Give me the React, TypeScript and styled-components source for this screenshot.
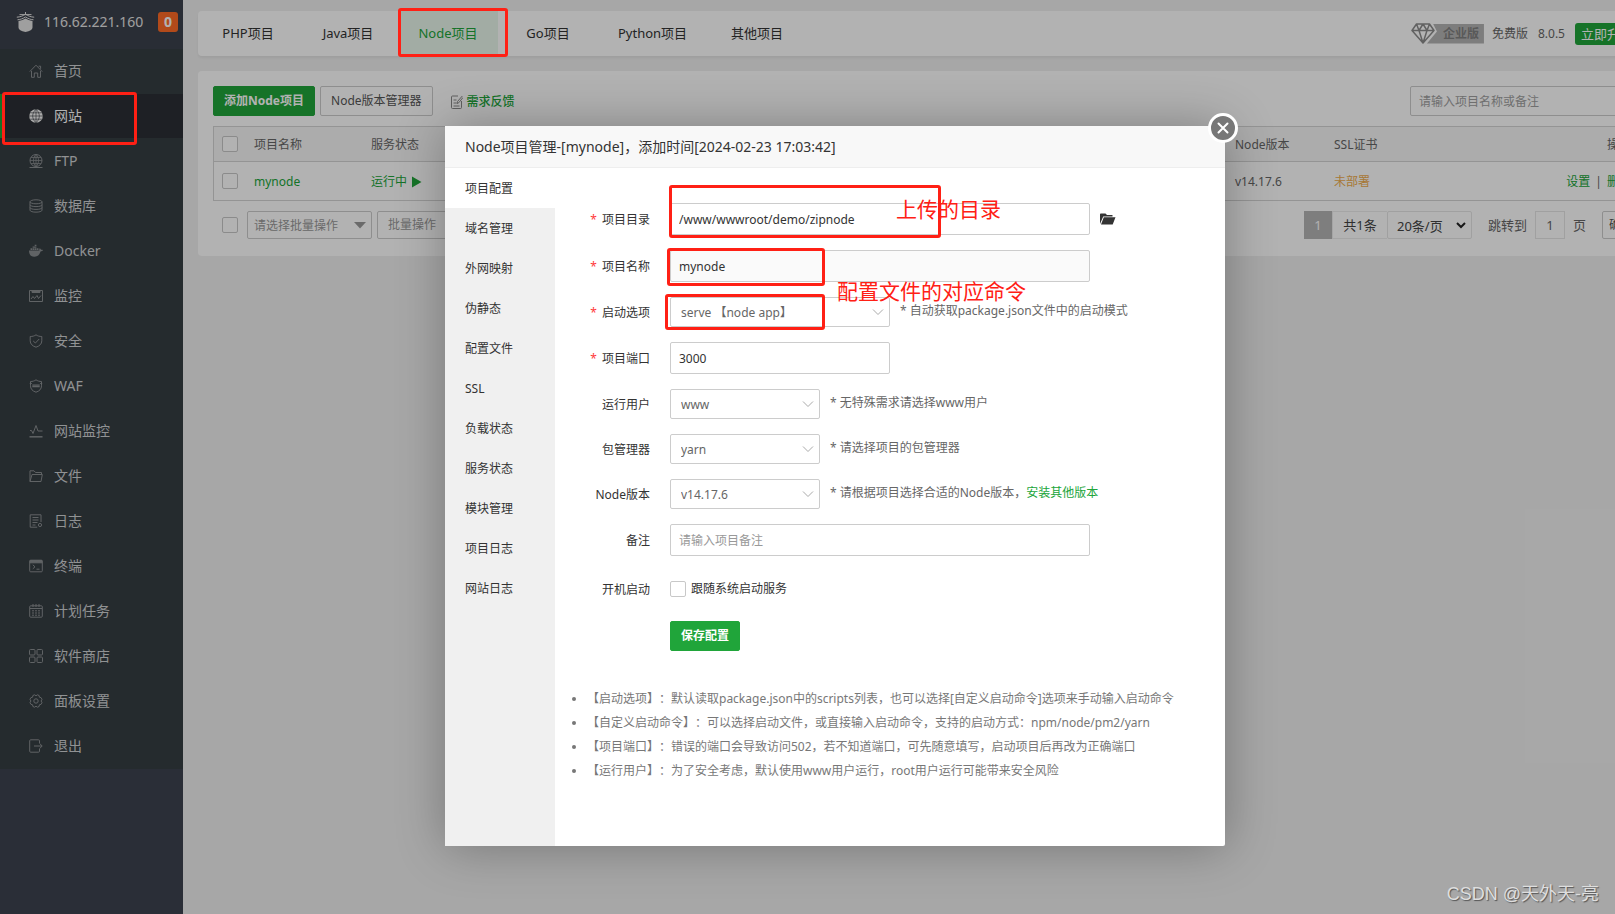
import React, { ReactNode } from "react";
import styled, { createGlobalStyle, css } from "styled-components";

const GREEN = "#20a53a";
const MARK = "#ff2015";

const GlobalStyle = createGlobalStyle`
  *, *::before, *::after { box-sizing: border-box; }
  body {
    margin: 0;
    background: #f0f0f0;
    color: #666;
    font-family: "Noto Sans", "Noto Sans CJK SC", sans-serif;
    font-size: 12px;
    line-height: 18px;
    text-spacing-trim: space-all;
  }
  button, input, select { font: inherit; color: inherit; margin: 0; }
  button { cursor: pointer; }
  ul { list-style: none; margin: 0; padding: 0; }
  a { text-decoration: none; }
`;

/* ---------- page frame ---------- */

const Viewport = styled.div`
  position: relative;
  overflow: hidden;
`;

const Page = styled.div`
  position: relative;
  display: flex;
  min-height: 100vh;
  margin-right: -55px;
`;

const Highlight = styled.span<{ $box: string }>`
  position: absolute;
  inset: ${(p) => p.$box};
  z-index: 20;
  border: 3px solid ${MARK};
  border-radius: 3px;
  pointer-events: none;
`;

/* ---------- sidebar ---------- */

const Sidebar = styled.aside`
  flex: none;
  width: 183px;
  background: #3d4250;
`;

const Brand = styled.div`
  display: flex;
  align-items: center;
  height: 49px;
  padding: 0 5px 5px 16px;
  color: #e4e4e4;
  font-size: 14px;
  background: #3c414c;
`;

const BrandIp = styled.span`
  flex: 1;
  margin-left: 9px;
`;

const Badge = styled.span`
  width: 20px;
  height: 20px;
  border-radius: 3px;
  background: #ff6b26;
  color: #fff;
  font-weight: 700;
  line-height: 20px;
  text-align: center;
`;

const Menu = styled.ul`
  background: #363e43;
`;

const MenuItem = styled.li`
  position: relative;
  padding-bottom: 1px;
`;

const MenuLink = styled.a<{ $active?: boolean }>`
  display: flex;
  align-items: center;
  gap: 11px;
  height: 44px;
  padding-left: 29px;
  color: #cfd1d3;
  font-size: 14px;
  & > svg { color: #8a8e91; }
  ${(p) =>
    p.$active &&
    css`
      padding-left: 27px;
      border-left: 2px solid ${GREEN};
      background: #2b2f35;
      color: #fff;
      & > svg { color: #f4f4f4; }
    `}
`;

/* ---------- main area ---------- */

const Main = styled.main`
  flex: 1;
  min-width: 0;
  padding: 11px 15px;
`;

const TopBar = styled.header`
  display: flex;
  align-items: center;
  justify-content: space-between;
  height: 45px;
  margin-bottom: 15px;
  padding-right: 16px;
  border-radius: 4px;
  background: #fff;
  box-shadow: 0 2px 3px rgba(0, 0, 0, 0.06);
`;

const Tabs = styled.nav`
  display: flex;
`;

const Tab = styled.a<{ $active?: boolean }>`
  position: relative;
  min-width: 100px;
  padding: 0 20px;
  color: ${(p) => (p.$active ? GREEN : "#333")};
  background: ${(p) => (p.$active ? "#e9f6eb" : "transparent")};
  font-size: 13px;
  line-height: 45px;
  text-align: center;
`;

const Version = styled.div`
  display: flex;
  align-items: center;
  gap: 10px;
`;

const Edition = styled.span`
  display: flex;
  align-items: center;
  margin-right: -2px;
`;

const Ribbon = styled.span`
  height: 20px;
  margin-left: -8px;
  padding: 0 5px 0 16px;
  background: #b4b4b4;
  clip-path: polygon(6px 0, 100% 0, 100% 100%, 0 100%, 10px 8px);
  color: #808080;
  font-weight: 700;
  line-height: 20px;
`;

const UpgradeButton = styled.button`
  height: 22px;
  padding: 0 6px;
  border: 0;
  border-radius: 3px;
  background: ${GREEN};
  color: #fff;
  font-size: 13px;
  line-height: 22px;
  white-space: nowrap;
`;

const Panel = styled.section`
  padding: 15px 15px 17px;
  border-radius: 4px;
  background: #fff;
`;

const Toolbar = styled.div`
  display: flex;
  align-items: center;
  gap: 5px;
  margin-bottom: 10px;
`;

const Button = styled.button<{ $primary?: boolean; $muted?: boolean; $compact?: boolean }>`
  height: ${(p) => (p.$muted ? 28 : 30)}px;
  padding: 0 ${(p) => (p.$compact ? 6 : 10)}px;
  border: 1px solid ${(p) => (p.$primary ? GREEN : "#ccc")};
  border-radius: 2px;
  background: ${(p) => (p.$primary ? GREEN : "#fff")};
  color: ${(p) => (p.$primary ? "#fff" : p.$compact ? "#555" : p.$muted ? "#999" : "#555")};
  font-size: 12px;
  font-weight: ${(p) => (p.$primary ? 700 : 400)};
  white-space: nowrap;
`;

const FeedbackLink = styled.a`
  display: flex;
  align-items: center;
  gap: 4px;
  margin-left: 13px;
  padding-top: 2px;
  color: ${GREEN};
  font-weight: 500;
  & > svg { color: #888; }
`;

const SearchInput = styled.input`
  width: 230px;
  height: 30px;
  margin-left: auto;
  padding: 0 8px;
  border: 1px solid #ccc;
  border-radius: 2px;
  background: #fff;
  &::placeholder { color: #a0a0a0; }
`;

const Checkbox = styled.input.attrs({ type: "checkbox" })`
  appearance: none;
  display: block;
  flex: none;
  width: 16px;
  height: 16px;
  border: 1px solid #c8c8c8;
  border-radius: 2px;
  background: #fff;
`;

const Table = styled.table`
  width: 100%;
  table-layout: fixed;
  border: 1px solid #d5d5d5;
  border-spacing: 0;
  th, td {
    padding: 2px 8px 0;
    font-weight: 400;
    text-align: left;
  }
  th {
    height: 35px;
    border-bottom: 1px solid #d5d5d5;
    background: #f6f6f6;
  }
  td { height: 38px; }
  th:first-child, td:first-child { padding-top: 0; }
  th:last-child, td:last-child { text-align: right; }
`;

const Col = styled.col<{ $w?: number }>`
  width: ${(p) => (p.$w ? `${p.$w}px` : "auto")};
`;

const GreenLink = styled.a`
  color: ${GREEN};
`;

const Running = styled.a`
  display: flex;
  align-items: center;
  gap: 5px;
  color: ${GREEN};
`;

const Warning = styled.span`
  color: #f0ad4e;
`;

const Divider = styled.span`
  margin: 0 5px;
`;

const TableFooter = styled.div`
  display: flex;
  align-items: center;
  gap: 5px;
  margin-top: 10px;
  padding-left: 9px;
`;

const SelectWrap = styled.span<{ $w: number }>`
  position: relative;
  display: block;
  flex: none;
  width: ${(p) => p.$w}px;
  & > svg {
    position: absolute;
    top: 50%;
    right: 6px;
    margin-top: -6px;
    color: #aaa;
    pointer-events: none;
  }
`;

const SelectBox = styled.select<{ $h: number; $pad: number; $ink: string; $line: string; $size: number }>`
  appearance: none;
  display: block;
  width: 100%;
  height: ${(p) => p.$h}px;
  padding: 1px 20px 0 ${(p) => p.$pad}px;
  border: 1px solid ${(p) => p.$line};
  border-radius: 2px;
  background: #fff;
  color: ${(p) => p.$ink};
  font-size: ${(p) => p.$size}px;
`;

const BulkSelect = styled.span`
  margin-left: 4px;
`;

const Pager = styled.div`
  display: flex;
  align-items: center;
  margin-left: auto;
  font-size: 13px;
`;

const PageCurrent = styled.span`
  width: 28px;
  height: 28px;
  background: #b5b5b5;
  color: #fff;
  line-height: 28px;
  text-align: center;
`;

const PageTotal = styled.span`
  height: 28px;
  width: 55px;
  border: 1px solid #ececec;
  border-right: 0;
  color: #444;
  line-height: 26px;
  text-align: center;
`;

const JumpLabel = styled.label`
  display: flex;
  align-items: center;
  gap: 8px;
  margin: 0 16px;
`;

const PageInput = styled.input`
  width: 30px;
  height: 28px;
  padding: 0;
  border: 1px solid #e6e6e6;
  background: #fff;
  text-align: center;
`;

/* ---------- dialog ---------- */

const Overlay = styled.div`
  position: absolute;
  inset: 0;
  z-index: 10;
  display: flex;
  align-items: flex-start;
  justify-content: center;
  padding-top: 126px;
  background: rgba(0, 0, 0, 0.3);
`;

const Dialog = styled.div`
  position: relative;
  display: flex;
  flex-direction: column;
  width: 780px;
  min-height: 720px;
  border-radius: 2px;
  background: #fff;
  box-shadow: 1px 1px 50px rgba(0, 0, 0, 0.3);
  color: #333;
`;

const DialogTitle = styled.h2`
  margin: 0;
  padding: 0 20px;
  border-bottom: 1px solid #eee;
  background: #f8f8f8;
  font-size: 14px;
  font-weight: 400;
  line-height: 41px;
`;

const CloseButton = styled.button`
  position: absolute;
  top: -13px;
  right: -13px;
  display: grid;
  place-items: center;
  width: 30px;
  height: 30px;
  padding: 0;
  border: 3px solid #fff;
  border-radius: 50%;
  background: #777;
  color: #fff;
`;

const DialogBody = styled.div`
  display: flex;
  flex: 1;
`;

const SideTabs = styled.nav`
  flex: none;
  width: 110px;
  background: #f0f0f0;
`;

const SideTab = styled.a<{ $active?: boolean }>`
  display: block;
  padding: 2px 0 0 20px;
  background: ${(p) => (p.$active ? "#fff" : "transparent")};
  color: #333;
  line-height: 38px;
`;

const Form = styled.form`
  display: flex;
  flex: 1;
  flex-direction: column;
  gap: 15px;
  padding: 35px 15px 0;
`;

const Row = styled.div<{ $tall?: boolean }>`
  display: flex;
  align-items: center;
  gap: 10px;
  min-height: ${(p) => (p.$tall ? 35 : 30)}px;
`;

const Label = styled.label`
  width: 80px;
  margin-right: 10px;
  padding-top: 2px;
  text-align: right;
`;

const Star = styled.span`
  margin-right: 5px;
  color: #ff3b3b;
`;

const Field = styled.input<{ $w: number }>`
  width: ${(p) => p.$w}px;
  height: 32px;
  padding: 0 8px;
  border: 1px solid #ccc;
  border-radius: 2px;
  background: #fff;
  &:disabled { background: #fafafa; }
  &::placeholder { color: #999; }
`;

const Hint = styled.span`
  padding-bottom: 3px;
  color: #666;
`;

const IconButton = styled.button`
  display: flex;
  padding: 0;
  border: 0;
  background: none;
`;

const CheckLabel = styled.label`
  display: flex;
  align-items: center;
  gap: 5px;
`;

const Actions = styled.div`
  padding-left: 100px;
`;

const Tips = styled.ul`
  margin-top: 21px;
  padding-left: 17px;
  list-style: disc;
  color: #777;
  line-height: 24px;
  white-space: nowrap;
`;

const Note = styled.span<{ $x: number; $y: number }>`
  position: absolute;
  left: ${(p) => p.$x}px;
  top: ${(p) => p.$y}px;
  z-index: 21;
  color: ${MARK};
  font-size: 21px;
  line-height: 30px;
  white-space: nowrap;
  pointer-events: none;
`;

const Watermark = styled.div`
  position: absolute;
  right: 16px;
  bottom: 6px;
  z-index: 30;
  color: #dedede;
  font-family: "Liberation Sans", "Noto Sans CJK SC", sans-serif;
  font-size: 18px;
  line-height: 28px;
  text-shadow: 1px 1px 1px #555;
`;

/* ---------- icons ---------- */

const Glyph = ({ children }: { children: ReactNode }) => (
  <svg width="14" height="14" viewBox="0 0 14 14" fill="none" stroke="currentColor" strokeWidth="1" aria-hidden="true">
    {children}
  </svg>
);

const icons: Record<string, ReactNode> = {
  home: <path d="M.8 7.6 7 1.2l6.2 6.4M2.5 7v6.3h2.8V9h3.4v4.3h2.8V7M9.6 2.2h2v2.6" />,
  site: (
    <>
      <circle cx="7" cy="7" r="6.8" fill="currentColor" stroke="none" />
      <path d="M7 0v14M0 7h14M1.2 3.8h11.6M1.2 10.2h11.6M7 .3C2.6 4 2.6 10 7 13.7M7 .3c4.4 3.7 4.4 9.7 0 13.4" stroke="#2b2f35" strokeWidth=".6" />
    </>
  ),
  ftp: (
    <>
      <circle cx="7" cy="6.5" r="6" />
      <path d="M7 .5v12M1 6.500h12M2 3.500h10M2 9.500h10M7 .5c-3.400 3-3.400 9 0 12M7 .5c3.400 3 3.400 9 0 12" strokeWidth=".8" />
      <path d="M.5 13.500h13" />
    </>
  ),
  database: (
    <>
      <ellipse cx="7" cy="2.8" rx="6" ry="2" />
      <path d="M1 2.8v8.4c0 2.6 12 2.6 12 0V2.8M1 5.8c0 2.4 12 2.4 12 0M1 8.6c0 2.4 12 2.4 12 0" />
    </>
  ),
  docker: (
    <path
      d="M0 6.500h10.400c-.3-1-.2-1.700.4-2.300.9.5 1.100 1 1.200 1.600.7-.1 1.300 0 2 .3-.4 1-1.300 1.400-2.500 1.400C10.500 11 8.400 12.800 5.200 12.800 1.700 12.800 0 10.500 0 6.500ZM1.500 4.200h1.700v1.700H1.500zM3.600 4.200h1.700v1.700H3.600zM5.700 4.200h1.700v1.700H5.700zM7.800 4.200h1.700v1.700H7.800zM3.600 2.500h3.800v1.300H3.600zM5.700.800h1.700v1.300H5.700z"
      fill="currentColor"
      stroke="none"
    />
  ),
  monitor: (
    <>
      <path d="M.5 1.500h13v11H.5z" />
      <path d="M3 1.500h8v2H3z" fill="currentColor" />
      <path d="m2 10 2-2.500 1.500 2L8 6.500l1.500 3 2.500-3" />
    </>
  ),
  shield: <path d="M7 .8c1.500 1.200 3.500 1.700 5.800 1.700v4.300c0 3.200-2.300 5.300-5.800 6.400-3.500-1.100-5.800-3.200-5.800-6.400V2.500C3.500 2.500 5.500 2 7 .8ZM4.200 7l2.200 2 3.800-4" />,
  waf: (
    <>
      <path d="M7 .8c1.500 1.200 3.500 1.700 5.500 1.700v4.300c0 3.200-2 5.300-5.500 6.400-3.500-1.100-5.500-3.200-5.500-6.400V2.500C3.500 2.500 5.500 2 7 .8Z" />
      <path d="M3.300 6.200h7.400M3.300 7.600h7.400M.8 4.500h2M11.200 4.500h2" strokeWidth="1.200" />
    </>
  ),
  pulse: (
    <>
      <path d="M1 6.500h1.500L4 9.500l3-8 2 5.500h4.500" />
      <path d="M.5 12.800h13" strokeWidth="1.500" />
    </>
  ),
  folder: <path d="M1 12.500V1.800h4l1.500 1.700h6v2M1 12.500h11l1.300-7H3L1 12.500Z" />,
  log: (
    <>
      <path d="M12 8V.8H1.200v12.400h7M3.500 3.500h6M3.500 6h6M3.500 8.500h5M3.500 11h3" />
      <circle cx="11" cy="11" r="1.600" />
    </>
  ),
  terminal: (
    <>
      <rect x=".7" y="1.200" width="12.600" height="11.600" rx="1" />
      <path d="M1 1.500h12v2.300H1z" fill="currentColor" />
      <path d="m3.800 5.800 2.200 2-2.200 2M7.500 10.200h3" />
    </>
  ),
  calendar: (
    <>
      <rect x=".7" y="1.800" width="12.600" height="11.400" rx="1" />
      <path d="M1 4.500h12M4 0v3M7 0v3M10 0v3M3 6.800h2M6 6.800h2M9 6.800h2M3 9h2M6 9h2M9 9h2M3 11.200h2M6 11.200h2M9 11.200h2" />
    </>
  ),
  store: (
    <>
      <rect x=".5" y=".5" width="5.500" height="5.500" rx="1" />
      <rect x="8" y=".5" width="5.500" height="5.500" rx="1" />
      <rect x=".5" y="8" width="5.500" height="5.500" rx="1" />
      <rect x="8" y="8" width="5.500" height="5.500" rx="1" />
    </>
  ),
  settings: (
    <>
      <path d="m5.600.8 1.400 1 1.400-1 1.700.7.3 1.700 1.700.5.9 1.600-.9 1.700.9 1.700-.9 1.600-1.700.5-.3 1.700-1.700.7-1.400-1-1.400 1-1.700-.7-.3-1.700-1.700-.5L1 8.700 1.900 7 1 5.300l.9-1.600 1.700-.5.3-1.700z" />
      <circle cx="7" cy="7" r="2.200" />
    </>
  ),
  exit: <path d="M10.500 4V1.800a1 1 0 0 0-1-1H1.700a1 1 0 0 0-1 1v10.400a1 1 0 0 0 1 1h7.800a1 1 0 0 0 1-1V10M5 7h8M10.500 4.300 13.200 7l-2.700 2.700" />,
};

const Logo = () => (
  <svg width="19" height="20" viewBox="0 0 19 20" fill="currentColor" aria-hidden="true">
    <path d="M9.500 0v2M3.500 2.600h12M.8 5.200C4 5 7 4 9.500 2.200 12 4 15 5 18.200 5.200M1.500 7.800C4.500 7.500 7 6.600 9.500 5c2.500 1.600 5 2.500 8 2.800" stroke="currentColor" strokeWidth="1" fill="none" />
    <path d="M2.500 9C5.500 8.600 7.500 7.900 9.500 6.600c2 1.300 4 2 7 2.400v6.500c0 2-2.500 3.500-7 4.500-4.500-1-7-2.500-7-4.500z" />
  </svg>
);

const Diamond = () => (
  <svg width="24" height="21" viewBox="0 0 24 21" fill="none" stroke="#8c8c8c" strokeWidth="1.500" strokeLinejoin="round" aria-hidden="true">
    <path d="M5.500 1h13L23 7.500 12 20 1 7.500zM1 7.500h22M5.500 1 8 7.500l4 12.500 4-12.500L18.500 1M8 7.500 12 1l4 6.500" />
  </svg>
);

const FeedbackIcon = () => (
  <svg width="12" height="14" viewBox="0 0 12 14" fill="none" stroke="currentColor" aria-hidden="true">
    <path d="M7 1H1.500a1 1 0 0 0-1 1v10.500a1 1 0 0 0 1 1h8a1 1 0 0 0 1-1V6M2.500 5h3M2.500 8h3M2.500 11h6M11.300 1 6.500 6.500 6 8.500l1.800-.8L12 2.500" />
  </svg>
);

const PlayIcon = () => (
  <svg width="10" height="12" viewBox="0 0 10 12" fill="currentColor" aria-hidden="true">
    <path d="M0 .5v11L9.500 6z" />
  </svg>
);

const Chevron = () => (
  <svg width="12" height="12" viewBox="0 0 12 12" fill="none" stroke="currentColor" aria-hidden="true">
    <path d="m1 3.500 5 5 5-5" />
  </svg>
);

const BoldChevron = () => (
  <svg width="10" height="12" viewBox="0 0 10 12" fill="none" stroke="#222" strokeWidth="2" aria-hidden="true">
    <path d="m1 4 4 4 4-4" />
  </svg>
);

const Caret = () => (
  <svg width="12" height="12" viewBox="0 0 12 12" fill="#999" aria-hidden="true">
    <path d="M0 3h12L6 9.500z" />
  </svg>
);

const OpenFolder = () => (
  <svg width="16" height="12" viewBox="0 0 16 12" fill="#333" aria-hidden="true">
    <path d="M0 11V1.500C0 .8.500.500 1 .500h4.500L7 2h5.500v1.500H3.200zM3.800 4.300H15.500L12.700 11.500H1z" />
  </svg>
);

const CloseIcon = () => (
  <svg width="12" height="12" viewBox="0 0 12 12" stroke="currentColor" strokeWidth="2" strokeLinecap="round" aria-hidden="true">
    <path d="m1.500 1.500 9 9M10.500 1.500l-9 9" />
  </svg>
);

/* ---------- data ---------- */

const menu: [string, string][] = [
  ["home", "首页"],
  ["site", "网站"],
  ["ftp", "FTP"],
  ["database", "数据库"],
  ["docker", "Docker"],
  ["monitor", "监控"],
  ["shield", "安全"],
  ["waf", "WAF"],
  ["pulse", "网站监控"],
  ["folder", "文件"],
  ["log", "日志"],
  ["terminal", "终端"],
  ["calendar", "计划任务"],
  ["store", "软件商店"],
  ["settings", "面板设置"],
  ["exit", "退出"],
];

const tabs = ["PHP项目", "Java项目", "Node项目", "Go项目", "Python项目", "其他项目"];

const sideTabs = ["项目配置", "域名管理", "外网映射", "伪静态", "配置文件", "SSL", "负载状态", "服务状态", "模块管理", "项目日志", "网站日志"];

const tips = [
  "【启动选项】：默认读取package.json中的scripts列表，也可以选择[自定义启动命令]选项来手动输入启动命令",
  "【自定义启动命令】：可以选择启动文件，或直接输入启动命令，支持的启动方式：npm/node/pm2/yarn",
  "【项目端口】：错误的端口会导致访问502，若不知道端口，可先随意填写，启动项目后再改为正确端口",
  "【运行用户】：为了安全考虑，默认使用www用户运行，root用户运行可能带来安全风险",
];

/* ---------- parts ---------- */

function FormRow({ id, label, required, tall, children }: { id: string; label: string; required?: boolean; tall?: boolean; children: ReactNode }) {
  return (
    <Row $tall={tall}>
      <Label htmlFor={id}>
        {required && <Star>*</Star>}
        {label}
      </Label>
      {children}
    </Row>
  );
}

function FormSelect({ id, width, value }: { id: string; width: number; value: string }) {
  return (
    <SelectWrap $w={width}>
      <SelectBox id={id} $h={30} $pad={10} $ink="#666" $line="#ccc" $size={12}>
        <option>{value}</option>
      </SelectBox>
      <Chevron />
    </SelectWrap>
  );
}

function ProjectDialog() {
  return (
    <Dialog role="dialog" aria-labelledby="dialog-title">
      <DialogTitle id="dialog-title">Node项目管理-[mynode]，添加时间[2024-02-23 17:03:42]</DialogTitle>
      <CloseButton aria-label="关闭">
        <CloseIcon />
      </CloseButton>
      <DialogBody>
        <SideTabs>
          {sideTabs.map((name, i) => (
            <SideTab key={name} href="#" $active={i === 0}>
              {name}
            </SideTab>
          ))}
        </SideTabs>
        <Form onSubmit={(e) => e.preventDefault()}>
          <FormRow id="path" label="项目目录" required>
            <Field id="path" $w={420} defaultValue="/www/wwwroot/demo/zipnode" />
            <IconButton type="button" aria-label="选择目录">
              <OpenFolder />
            </IconButton>
          </FormRow>
          <FormRow id="name" label="项目名称" required>
            <Field id="name" $w={420} defaultValue="mynode" disabled />
          </FormRow>
          <FormRow id="script" label="启动选项" required>
            <FormSelect id="script" width={220} value="serve 【node app】" />
            <Hint>* 自动获取package.json文件中的启动模式</Hint>
          </FormRow>
          <FormRow id="port" label="项目端口" required>
            <Field id="port" $w={220} defaultValue="3000" />
          </FormRow>
          <FormRow id="user" label="运行用户">
            <FormSelect id="user" width={150} value="www" />
            <Hint>* 无特殊需求请选择www用户</Hint>
          </FormRow>
          <FormRow id="pkg" label="包管理器">
            <FormSelect id="pkg" width={150} value="yarn" />
            <Hint>* 请选择项目的包管理器</Hint>
          </FormRow>
          <FormRow id="node" label="Node版本">
            <FormSelect id="node" width={150} value="v14.17.6" />
            <Hint>
              * 请根据项目选择合适的Node版本，<GreenLink href="#">安装其他版本</GreenLink>
            </Hint>
          </FormRow>
          <FormRow id="remark" label="备注">
            <Field id="remark" $w={420} placeholder="请输入项目备注" />
          </FormRow>
          <FormRow id="boot" label="开机启动" tall>
            <CheckLabel>
              <Checkbox id="boot" />
              跟随系统启动服务
            </CheckLabel>
          </FormRow>
          <Actions>
            <Button $primary>保存配置</Button>
          </Actions>
          <Tips>
            {tips.map((tip) => (
              <li key={tip}>{tip}</li>
            ))}
          </Tips>
        </Form>
      </DialogBody>
      <Highlight $box="59px 284px 608px 224px" />
      <Highlight $box="122px 400px 560px 222px" />
      <Highlight $box="168px 400px 516px 220px" />
      <Note $x={451} $y={68}>上传的目录</Note>
      <Note $x={392} $y={150}>配置文件的对应命令</Note>
    </Dialog>
  );
}

export default function App() {
  return (
    <Viewport>
      <GlobalStyle />
      <Page>
        <Sidebar>
          <Brand>
            <Logo />
            <BrandIp>116.62.221.160</BrandIp>
            <Badge>0</Badge>
          </Brand>
          <Menu>
            {menu.map(([icon, name]) => (
              <MenuItem key={icon}>
                <MenuLink href="#" $active={icon === "site"}>
                  <Glyph>{icons[icon]}</Glyph>
                  {name}
                </MenuLink>
                {icon === "site" && <Highlight $box="-2px 46px -6px 2px" />}
              </MenuItem>
            ))}
          </Menu>
        </Sidebar>
        <Main>
          <TopBar>
            <Tabs>
              {tabs.map((name) => (
                <Tab key={name} href="#" $active={name === "Node项目"}>
                  {name}
                  {name === "Node项目" && <Highlight $box="-3px -10px -1px 0" />}
                </Tab>
              ))}
            </Tabs>
            <Version>
              <Edition>
                <Diamond />
                <Ribbon>企业版</Ribbon>
              </Edition>
              <span>免费版</span>
              <span>8.0.5</span>
              <UpgradeButton>立即升级</UpgradeButton>
            </Version>
          </TopBar>
          <Panel>
            <Toolbar>
              <Button $primary>添加Node项目</Button>
              <Button>Node版本管理器</Button>
              <FeedbackLink href="#">
                <FeedbackIcon />
                需求反馈
              </FeedbackLink>
              <SearchInput aria-label="搜索项目" placeholder="请输入项目名称或备注" />
            </Toolbar>
            <Table>
              <colgroup>
                <Col $w={32} />
                <Col $w={117} />
                <Col />
                <Col $w={99} />
                <Col $w={200} />
                <Col $w={113} />
              </colgroup>
              <thead>
                <tr>
                  <th><Checkbox aria-label="全选" /></th>
                  <th>项目名称</th>
                  <th>服务状态</th>
                  <th>Node版本</th>
                  <th>SSL证书</th>
                  <th>操作</th>
                </tr>
              </thead>
              <tbody>
                <tr>
                  <td><Checkbox aria-label="选择 mynode" /></td>
                  <td><GreenLink href="#">mynode</GreenLink></td>
                  <td><Running href="#">运行中<PlayIcon /></Running></td>
                  <td>v14.17.6</td>
                  <td><Warning>未部署</Warning></td>
                  <td>
                    <GreenLink href="#">设置</GreenLink>
                    <Divider>|</Divider>
                    <GreenLink href="#">删除</GreenLink>
                  </td>
                </tr>
              </tbody>
            </Table>
            <TableFooter>
              <Checkbox aria-label="选择全部项目" />
              <BulkSelect>
                <SelectWrap $w={125}>
                  <SelectBox aria-label="批量操作" $h={28} $pad={6} $ink="#999" $line="#ccc" $size={12}>
                    <option>请选择批量操作</option>
                  </SelectBox>
                  <Caret />
                </SelectWrap>
              </BulkSelect>
              <Button $muted>批量操作</Button>
              <Pager>
                <PageCurrent>1</PageCurrent>
                <PageTotal>共1条</PageTotal>
                <SelectWrap $w={85}>
                  <SelectBox aria-label="每页条数" $h={28} $pad={9} $ink="#444" $line="#e6e6e6" $size={13}>
                    <option>20条/页</option>
                  </SelectBox>
                  <BoldChevron />
                </SelectWrap>
                <JumpLabel>
                  跳转到
                  <PageInput defaultValue="1" />
                  页
                </JumpLabel>
                <Button $muted $compact>确定</Button>
              </Pager>
            </TableFooter>
          </Panel>
        </Main>
        <Overlay>
          <ProjectDialog />
        </Overlay>
      </Page>
      <Watermark>CSDN @天外天-亮</Watermark>
    </Viewport>
  );
}
